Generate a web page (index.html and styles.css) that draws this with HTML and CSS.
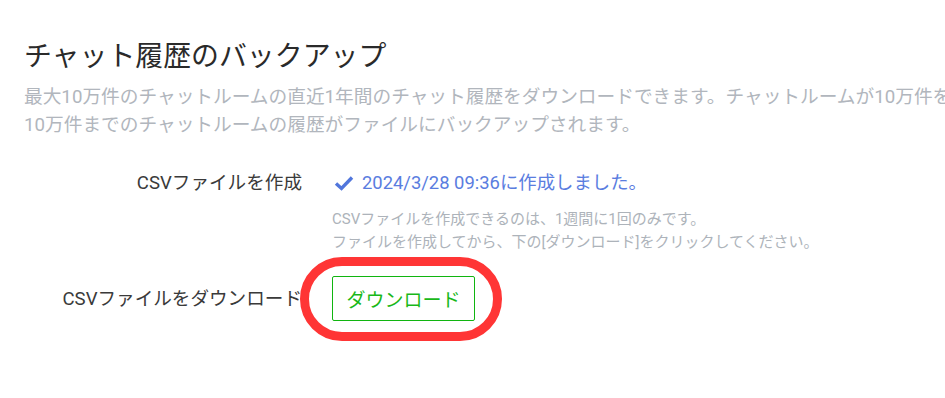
FILE: index.html
```html
<!DOCTYPE html>
<html lang="ja">
<head>
<meta charset="utf-8">
<link rel="stylesheet" href="styles.css">
</head>
<body>
<main class="page">
  <h1 class="title">チャット履歴のバックアップ</h1>
  <p class="desc">最大10万件のチャットルームの直近1年間のチャット履歴をダウンロードできます。チャットルームが10万件を超える場合は、最新の<br>10万件までのチャットルームの履歴がファイルにバックアップされます。</p>
  <div class="form">
    <div class="label label-top">CSVファイルを作成</div>
    <div class="value">
      <div class="status">
        <svg class="check" viewBox="0 0 20 16" width="20" height="16"><path d="M2 8.5 L7.5 13.5 L18 2.5" fill="none" stroke="currentColor" stroke-width="3.4" stroke-linejoin="miter"/></svg>
        <span>2024/3/28 09:36に作成しました。</span>
      </div>
      <p class="note">CSVファイルを作成できるのは、1週間に1回のみです。<br>ファイルを作成してから、下の[ダウンロード]をクリックしてください。</p>
    </div>
    <div class="label label-mid">CSVファイルをダウンロード</div>
    <div class="value value-mid">
      <div class="btn-wrap">
        <button class="btn" type="button">ダウンロード</button>
        <span class="ring"></span>
      </div>
    </div>
  </div>
</main>
</body>
</html>
```

FILE: styles.css
```css
html {
  overflow: hidden;
}
html, body {
  margin: 0;
  padding: 0;
  background: #ffffff;
}
body {
  font-family: Roboto, "Noto Sans CJK JP", sans-serif;
  color: #333333;
  min-height: 398px;
}
.page {
  padding: 37px 0 0 24px;
  width: 1200px;
}
.title {
  margin: 0;
  font-size: 27.9px;
  font-weight: 400;
  line-height: 40px;
  color: #2a2a2a;
  white-space: nowrap;
}
.desc {
  margin: 6px 0 0;
  font-size: 18.7px;
  line-height: 28px;
  color: #b1b6bd;
  white-space: nowrap;
}
.form {
  display: grid;
  grid-template-columns: 278px auto;
  column-gap: 30px;
  margin-top: 30px;
}
.label {
  text-align: right;
  font-size: 18.6px;
  line-height: 28px;
  color: #3a3a3a;
  white-space: nowrap;
}
.label-mid {
  align-self: center;
  margin-top: 22px;
}
.value-mid {
  margin-top: 22px;
}
.status {
  display: flex;
  align-items: center;
  gap: 8px;
  font-size: 18.4px;
  line-height: 28px;
  color: #5a7ddf;
  padding-left: 2px;
}
.check {
  color: #5176dc;
  display: block;
}
.note {
  margin: 11px 0 0;
  font-size: 15px;
  line-height: 23px;
  color: #adb3ba;
  white-space: nowrap;
}
.btn-wrap {
  position: relative;
  display: inline-block;
}
.btn {
  display: block;
  width: 143px;
  height: 45px;
  padding: 0;
  border: 1px solid #10b510;
  border-radius: 2px;
  background: #ffffff;
  color: #19b819;
  font-family: Roboto, "Noto Sans CJK JP", sans-serif;
  font-size: 19px;
}
.ring {
  position: absolute;
  left: -32px;
  top: -19px;
  width: 202px;
  height: 84px;
  box-sizing: border-box;
  border: 9px solid #ff3535;
  border-radius: 42px / 42px;
  pointer-events: none;
}
```
